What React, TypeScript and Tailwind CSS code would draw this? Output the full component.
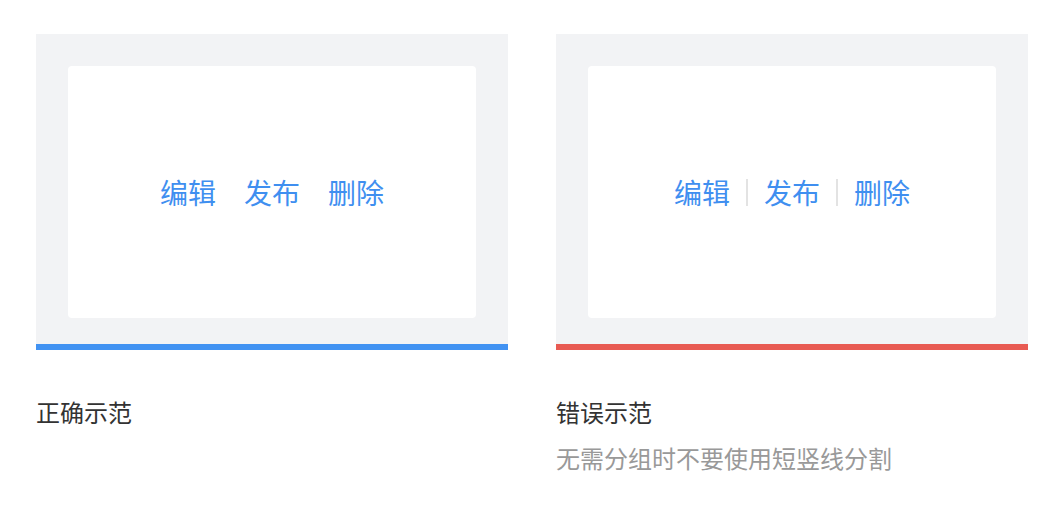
const font = { fontFamily: '"Noto Sans CJK SC", "Noto Sans", sans-serif' };

function Example({
  bar,
  title,
  note,
  divided = false,
}: {
  bar: string;
  title: string;
  note?: string;
  divided?: boolean;
}) {
  const actions = ['编辑', '发布', '删除'];

  return (
    <div className="w-[472px]">
      <div className={`bg-[#f2f3f5] pt-8 px-8 pb-[26px] border-b-[6px] ${bar}`}>
        <div className="h-[252px] rounded bg-white flex items-center justify-center">
          {actions.map((a, i) => (
            <div key={a} className="flex items-center">
              {i > 0 ? (
                divided ? (
                  <span className="mx-4 w-[2px] h-[27px] bg-[#e3e3e3]" />
                ) : (
                  <span className="w-7" />
                )
              ) : null}
              <span className="text-[28px] leading-none text-[#3f8ff0]">{a}</span>
            </div>
          ))}
        </div>
      </div>
      <div className="mt-12 text-2xl leading-[28px] text-[#333333]">{title}</div>
      {note ? (
        <div className="mt-[18px] text-2xl leading-[28px] text-[#999999]">{note}</div>
      ) : null}
    </div>
  );
}

export default function App() {
  return (
    <div className="w-[1064px] h-[516px] bg-white pt-[34px] px-9 flex gap-12" style={font}>
      <Example bar="border-[#4192f2]" title="正确示范" />
      <Example
        bar="border-[#e85a52]"
        title="错误示范"
        note="无需分组时不要使用短竖线分割"
        divided
      />
    </div>
  );
}
